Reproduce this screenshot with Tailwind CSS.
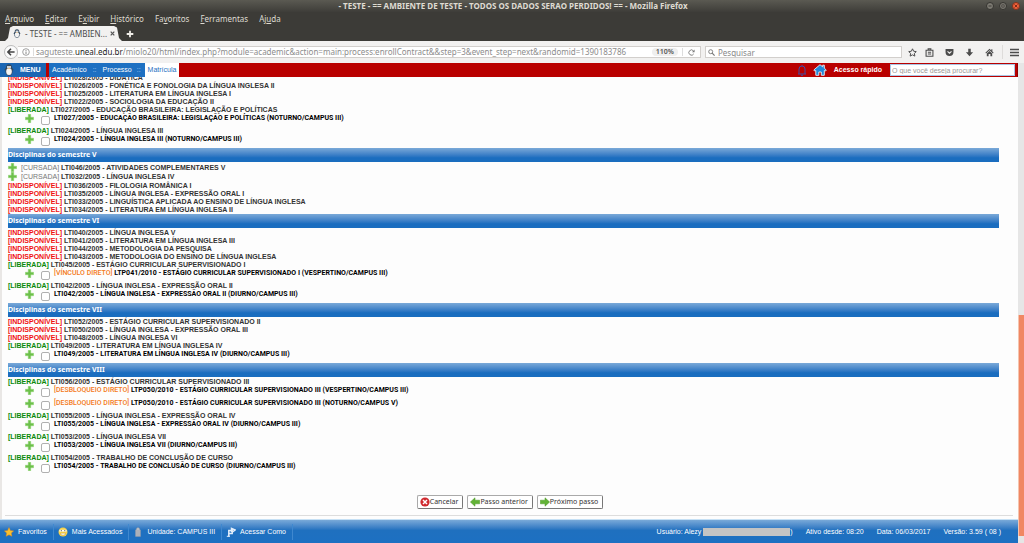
<!DOCTYPE html>
<html lang="pt-BR">
<head>
<meta charset="utf-8">
<meta name="viewport" content="width=device-width, initial-scale=1">
<title>- TESTE - == AMBIENTE DE TESTE - TODOS OS DADOS SERAO PERDIDOS! ==</title>
<script src="https://cdn.jsdelivr.net/npm/@tailwindcss/browser@4"></script>
</head>
<body class="flex h-screen flex-col overflow-hidden bg-[#fdfdfd] font-['Liberation_Sans',sans-serif] text-[7px] leading-[8px] text-[#333]">
<svg class="hidden">
  <symbol id="plus" viewBox="0 0 10 10"><path d="M3.600.4h2.800v3.200h3.200v2.800H6.400v3.200H3.600V6.400H.4V3.600h3.200z" fill="#6cc04a" stroke="#8fd474" stroke-width=".5"/></symbol>
  <symbol id="mascot" viewBox="0 0 10 12"><path d="M5 .3C2.600.3 2 2 2 3.500L.3 6l1.200.5C1.200 9.300 2.500 11.700 5 11.700s3.800-2.400 3.500-5.200L9.700 6 8 3.500C8 2 7.400.3 5 .3z" fill="#34495e"/><ellipse cx="5" cy="7.500" rx="2.800" ry="3.600" fill="#f4f4f4"/><circle cx="4" cy="3" r="1" fill="#fff"/><circle cx="6" cy="3" r="1" fill="#fff"/><path d="M4 4h2L5 5.300z" fill="#e9a13b"/></symbol>
</svg>

<!-- Window title and menu -->
<header class="shrink-0 bg-[#3c3b37] font-['Noto_Sans',sans-serif] text-[#dfdbd2]">
  <div class="flex h-3 items-center bg-linear-to-b from-[#5b5a52] to-[#3e3d39]">
    <h1 class="flex-1 pl-10 text-center text-[8px] font-bold">- TESTE - == AMBIENTE DE TESTE - TODOS OS DADOS SERAO PERDIDOS! == - Mozilla Firefox</h1>
    <div class="flex gap-[5px] pr-1">
      <button aria-label="Minimizar" class="size-2 rounded-full border border-[#34332f] bg-[#7d7b73]"><svg viewBox="0 0 6 6"><path d="M1.500 3h3" stroke="#3c3b37"/></svg></button>
      <button aria-label="Maximizar" class="size-2 rounded-full border border-[#34332f] bg-[#7d7b73]"><svg viewBox="0 0 6 6"><path d="M1.800 1.800h2.400v2.400H1.800z" fill="none" stroke="#3c3b37" stroke-width=".7"/></svg></button>
      <button aria-label="Fechar" class="size-2 rounded-full border border-[#7d321c] bg-[#f0603a]"><svg viewBox="0 0 6 6"><path d="M1.500 1.500l3 3m0-3l-3 3" stroke="#5d2211" stroke-width=".8"/></svg></button>
    </div>
  </div>
  <nav class="flex h-[14px] items-center gap-[11px] pl-[5px] text-[8px]">
    <button><u>A</u>rquivo</button><button><u>E</u>ditar</button><button>E<u>x</u>ibir</button><button><u>H</u>istórico</button><button>Fa<u>v</u>oritos</button><button><u>F</u>erramentas</button><button>Aj<u>u</u>da</button>
  </nav>
  <div class="flex h-[15px] items-center pl-[5px]">
    <div class="flex h-full w-[117px] items-center bg-[#f2f1f0] pr-[7px] pl-2 text-[#4c4c4c] [clip-path:polygon(0_100%,3px_80%,5px_10%,8px_0,109px_0,112px_10%,114px_80%,117px_100%)]">
      <svg class="h-[9px] w-2 shrink-0"><use href="#mascot"/></svg>
      <span class="ml-1 flex-1 text-[8px] whitespace-nowrap">- TESTE - == AMBIEN...</span>
      <button aria-label="Fechar aba"><svg class="size-[5px]" viewBox="0 0 5 5"><path d="M.7.7l3.600 3.600m0-3.600L.7 4.300" stroke="#555" stroke-width="1.200"/></svg></button>
    </div>
    <button aria-label="Nova aba" class="ml-1"><svg class="size-2" viewBox="0 0 8 8"><path d="M4 .7v6.600M.7 4h6.600" stroke="#f0eee8" stroke-width="1.800"/></svg></button>
  </div>
</header>

<!-- Navigation toolbar -->
<div class="flex h-[22px] shrink-0 items-center bg-[#f2f1f0] pr-[5px] pl-1 font-['Noto_Sans',sans-serif] text-[#444]">
  <button aria-label="Voltar" class="grid size-[14px] shrink-0 place-items-center rounded-full border border-[#bbb] bg-[#fbfbfb]"><svg class="size-2" viewBox="0 0 8 8"><path d="M4 .8L.9 4 4 7.200M1 4h6.600" fill="none" stroke="#444" stroke-width="1.500"/></svg></button>
  <div class="flex h-3 flex-1 items-center border border-l-0 border-[#d2cfcc] bg-white pl-1">
    <svg class="size-2 shrink-0" viewBox="0 0 8 8"><circle cx="4" cy="4" r="3.300" fill="none" stroke="#888" stroke-width=".8"/><path d="M4 2v.9M4 3.500V6" stroke="#888"/></svg>
    <div class="ml-[3px] h-2 border-l border-[#ddd]"></div>
    <div class="ml-[2px] flex-1 text-[8px] whitespace-nowrap text-[#8c8c8c]">saguteste.<span class="text-[#222]">uneal.edu.br</span>/miolo20/html/index.php?module=academic&amp;action=main:process:enrollContract&amp;&amp;step=3&amp;event_step=next&amp;randomid=1390183786</div>
    <button class="rounded-full bg-[#efefef] px-1 text-[7px] font-semibold text-[#555]">110%</button>
    <div class="ml-1 h-2 border-l border-[#ddd]"></div>
    <button aria-label="Recarregar" class="mx-[5px]"><svg class="size-[7px]" viewBox="0 0 8 8"><path d="M6.600 5.500A3 3 0 1 1 6.300 2.200" fill="none" stroke="#777"/><path d="M7.500.6v3H4.600z" fill="#777"/></svg></button>
  </div>
  <label class="ml-1 flex h-3 w-[197px] items-center gap-[3px] border border-[#d2cfcc] bg-white px-[2px]">
    <svg class="size-[7px] shrink-0" viewBox="0 0 7 7"><circle cx="2.700" cy="2.700" r="2" fill="none" stroke="#777" stroke-width=".9"/><path d="M4.200 4.200L6.600 6.600" stroke="#777" stroke-width="1.200"/></svg>
    <input type="text" aria-label="Pesquisar" placeholder="Pesquisar" class="h-[10px] min-w-0 flex-1 text-[8px] outline-none placeholder:text-[#888]">
  </label>
  <div class="ml-[6px] flex items-center">
    <button aria-label="Favoritar"><svg class="size-[9px]" viewBox="0 0 10 10"><path d="M5 .9l1.300 2.700 2.900.4-2.100 2 .5 3L5 7.600 2.400 9l.5-3L.8 4l2.900-.4z" fill="none" stroke="#4c4c4c" stroke-width="1.100"/></svg></button>
    <button aria-label="Biblioteca" class="ml-2"><svg class="size-[9px]" viewBox="0 0 10 10"><path d="M1.200 2.500h7.600v6.700H1.200zM3.500 2.300V1h3v1.300M3.200 4.700h3.600M3.200 6.700h3.600" fill="none" stroke="#4c4c4c" stroke-width="1.200"/></svg></button>
    <button aria-label="Pocket" class="ml-[11px]"><svg class="size-[9px]" viewBox="0 0 10 10"><path d="M.6 1h8.800v3.500a4.400 4.400 0 0 1-8.800 0z" fill="#4c4c4c"/><path d="M2.800 3.700L5 5.800l2.200-2.100" fill="none" stroke="#f2f1f0" stroke-width="1.200"/></svg></button>
    <button aria-label="Downloads" class="ml-[11px]"><svg class="size-[9px]" viewBox="0 0 10 10"><path d="M3.600.8h2.800v4H9L5 9.300 1 4.800h2.600z" fill="#4c4c4c"/></svg></button>
    <button aria-label="Página inicial" class="ml-[11px]"><svg class="size-[9px]" viewBox="0 0 10 10"><path d="M5 .8L.4 5.200l.8.8L5 2.600 8.800 6l.8-.8L8.200 3.800V1.500H7v1.200z" fill="#4c4c4c"/><path d="M2 6l3-2.700L8 6v3.200H6V6.600H4v2.600H2z" fill="#4c4c4c"/></svg></button>
    <div class="ml-2 h-[14px] border-l border-[#dedcda]"></div>
    <button aria-label="Abrir menu" class="ml-[7px]"><svg class="size-[9px]" viewBox="0 0 9 9"><path d="M0 1.500h9M0 4.500h9M0 7.500h9" stroke="#4c4c4c" stroke-width="1.300"/></svg></button>
  </div>
</div>

<div class="flex min-h-0 flex-1">
  <div class="flex min-w-0 flex-1 flex-col">
    <!-- Application bar -->
    <div class="flex h-[14px] shrink-0 items-center border-r border-[#8c0000] bg-[#b90000] text-white">
      <button class="flex h-full w-[46px] items-center gap-[6px] bg-[#1a66b4] pl-1 font-bold"><svg class="h-3 w-[10px]"><use href="#mascot"/></svg>MENU</button>
      <nav class="ml-[3px] flex h-full items-center bg-[#1d70c2]">
        <a href="#" class="pl-[3px]">Acadêmico</a><span class="px-[6px] text-[#a9cdf0]">::</span><a href="#">Processo</a><span class="pr-1 pl-[5px] text-[#a9cdf0]">::</span>
        <a href="#" class="flex h-full items-center bg-white px-[3px] text-[#1d70c2]">Matrícula</a>
      </nav>
      <div class="flex-1"></div>
      <button aria-label="Avisos"><svg class="h-[11px] w-[10px]" viewBox="0 0 10 11"><path d="M1 9h8M2 9V4a3 3 0 0 1 6 0v5M4 10.300h2M5 1V.2" fill="none" stroke="#3f4fa6" stroke-width="1"/></svg></button>
      <button aria-label="Início" class="ml-[6px]"><svg class="h-3 w-[14px]" viewBox="0 0 14 12"><path d="M7 .7L.8 6l1 1.100 1-.6v4.800h3V8h2.500v3.300h3V6.500l1 .6 1-1.100-2-1.800V1.200H9.700v1.600z" fill="#2187d8" stroke="#e8f3fb" stroke-width=".9"/></svg></button>
      <label for="quick" class="ml-[7px] font-bold">Acesso rápido</label>
      <input id="quick" type="text" placeholder="O que você deseja procurar?" class="mr-[2px] ml-2 h-3 w-[125px] border border-[#aac6e4] bg-white px-px text-[7px] text-[#333] outline-none placeholder:text-[#999]">
    </div>
    <!-- Enrolment list -->
    <main class="flex min-h-0 flex-1 flex-col border-l-2 border-[#e9e7e5]">
      <div class="min-h-0 flex-1 overflow-hidden pr-[19px] pl-[6px]">
        <div id="list" class="-mt-[3px]"></div>
      </div>
      <div class="flex shrink-0 justify-center gap-1 pb-[6px] font-['Noto_Sans',sans-serif] text-[7px] text-[#333]">
        <button class="flex h-[14px] items-center rounded-[2px] border border-[#aaa] border-r-[#777] border-b-[#777] bg-white pr-1 pl-[2px]"><svg class="size-[10px]" viewBox="0 0 10 10"><circle cx="5" cy="5" r="4.600" fill="#cf2a2f"/><path d="M3 3l4 4m0-4L3 7" stroke="#fff" stroke-width="1.500"/></svg>Cancelar</button>
        <button class="flex h-[14px] items-center rounded-[2px] border border-[#aaa] border-r-[#777] border-b-[#777] bg-white pr-1 pl-[2px]"><svg class="size-[10px]" viewBox="0 0 10 10"><path d="M5 .8v2.400h4.600v3.600H5v2.400L.4 5z" fill="#62b336" stroke="#4b9427" stroke-width=".5"/></svg>Passo anterior</button>
        <button class="flex h-[14px] items-center rounded-[2px] border border-[#aaa] border-r-[#777] border-b-[#777] bg-white pr-1 pl-[2px]"><svg class="size-[10px]" viewBox="0 0 10 10"><path d="M5 .8v2.400H.4v3.600H5v2.400L9.600 5z" fill="#62b336" stroke="#4b9427" stroke-width=".5"/></svg>Próximo passo</button>
      </div>
      <div class="mr-[5px] mb-[3px] ml-[3px] shrink-0 border-t border-[#ddd]"></div>
    </main>
    <!-- Status bar -->
    <footer class="flex h-6 shrink-0 items-center border-t border-[#c5e0f5] bg-linear-to-b from-[#79a9d8] via-[#1f70bf] via-45% to-[#1d70c2] text-white">
      <a href="#" class="flex h-4 items-center gap-1 border-r border-[#3f88cf] pr-[6px] pl-1"><svg class="size-[10px]" viewBox="0 0 10 10"><path d="M5 .6l1.400 2.900 3.200.4-2.300 2.200.6 3.200L5 7.800 2.100 9.300l.6-3.200L.4 3.900l3.200-.4z" fill="#fbc02d" stroke="#e08a1e" stroke-width=".5"/></svg>Favoritos</a>
      <a href="#" class="flex h-4 items-center gap-1 border-r border-[#3f88cf] pr-[6px] pl-1"><svg class="size-[10px]" viewBox="0 0 10 10"><circle cx="5" cy="5" r="4.500" fill="#f9d34a"/><path d="M1.500 3.700h7" stroke="#fff" stroke-width="1.800"/><path d="M2.800 3.700h1M6.300 3.700h1" stroke="#444"/><path d="M2.500 6.200h5a2.500 2 0 0 1-5 0z" fill="#fff" stroke="#b8862a" stroke-width=".4"/></svg>Mais Acessados</a>
      <a href="#" class="flex h-4 items-center gap-1 border-r border-[#3f88cf] pr-[6px] pl-1"><svg class="size-[10px]" viewBox="0 0 10 10"><path d="M2.500 9.500V3l1-.8V1.200L5 .4l1.500.8v1l1 .8v6.500z" fill="#b9bec6" stroke="#8a919c" stroke-width=".4"/><path d="M4 3v6M6 3v6" stroke="#8a919c" stroke-width=".6"/></svg>Unidade: CAMPUS III</a>
      <a href="#" class="flex h-4 items-center gap-1 border-r border-[#3f88cf] pr-[6px] pl-1"><svg class="size-[10px]" viewBox="0 0 10 10"><path d="M2.800 9.500V3.500h3.400v3H3M5.500 5V1.500L9 3 6.500 5" fill="none" stroke="#e4eefa" stroke-width="1.500"/><path d="M.8 9.300h3.200" stroke="#e4eefa"/></svg>Acessar Como</a>
      <div class="ml-auto flex items-center gap-[13px] pr-[17px]">
        <span class="flex items-center">Usuário: Alezy<span class="ml-[2px] h-2 w-[87px] bg-[#c4c4c4]"></span>)</span>
        <span>Ativo desde: 08:20</span><span>Data: 06/03/2017</span><span>Versão: 3.59 ( 08 )</span>
      </div>
    </footer>
  </div>
  <!-- Page scroll bar -->
  <div class="flex w-[6px] flex-col bg-[#e6e6e6]"><div class="flex-[252]"></div><div class="flex-[221] border-l border-[#f5c4ae] bg-[#f08763]"></div><div class="flex-[7]"></div></div>
</div>

<script>
const X = 'x', L = 'l', C = 'c', S = 's', B = 'b';
const rows = [
  [X, 'LTI028/2005 - DIDÁTICA'],
  [X, 'LTI026/2005 - FONÉTICA E FONOLOGIA DA LÍNGUA INGLESA II'],
  [X, 'LTI025/2005 - LITERATURA EM LÍNGUA INGLESA I'],
  [X, 'LTI022/2005 - SOCIOLOGIA DA EDUCAÇÃO II'],
  [L, 'LTI027/2005 - EDUCAÇÃO BRASILEIRA: LEGISLAÇÃO E POLÍTICAS'],
  [S, 'LTI027/2005 - EDUCAÇÃO BRASILEIRA: LEGISLAÇÃO E POLÍTICAS (NOTURNO/CAMPUS III)'],
  [L, 'LTI024/2005 - LÍNGUA INGLESA III'],
  [S, 'LTI024/2005 - LÍNGUA INGLESA III (NOTURNO/CAMPUS III)'],
  [B, 'Disciplinas do semestre V'],
  [C, 'LTI046/2005 - ATIVIDADES COMPLEMENTARES V'],
  [C, 'LTI032/2005 - LÍNGUA INGLESA IV'],
  [X, 'LTI036/2005 - FILOLOGIA ROMÂNICA I'],
  [X, 'LTI035/2005 - LÍNGUA INGLESA - EXPRESSÃO ORAL I'],
  [X, 'LTI033/2005 - LINGUÍSTICA APLICADA AO ENSINO DE LÍNGUA INGLESA'],
  [X, 'LTI034/2005 - LITERATURA EM LÍNGUA INGLESA II'],
  [B, 'Disciplinas do semestre VI'],
  [X, 'LTI040/2005 - LÍNGUA INGLESA V'],
  [X, 'LTI041/2005 - LITERATURA EM LÍNGUA INGLESA III'],
  [X, 'LTI044/2005 - METODOLOGIA DA PESQUISA'],
  [X, 'LTI043/2005 - METODOLOGIA DO ENSINO DE LÍNGUA INGLESA'],
  [L, 'LTI045/2005 - ESTÁGIO CURRICULAR SUPERVISIONADO I'],
  [S, 'LTP041/2010 - ESTÁGIO CURRICULAR SUPERVISIONADO I (VESPERTINO/CAMPUS III)', '[VÍNCULO DIRETO]'],
  [L, 'LTI042/2005 - LÍNGUA INGLESA - EXPRESSÃO ORAL II'],
  [S, 'LTI042/2005 - LÍNGUA INGLESA - EXPRESSÃO ORAL II (DIURNO/CAMPUS III)'],
  [B, 'Disciplinas do semestre VII'],
  [X, 'LTI052/2005 - ESTÁGIO CURRICULAR SUPERVISIONADO II'],
  [X, 'LTI050/2005 - LÍNGUA INGLESA - EXPRESSÃO ORAL III'],
  [X, 'LTI048/2005 - LÍNGUA INGLESA VI'],
  [L, 'LTI049/2005 - LITERATURA EM LÍNGUA INGLESA IV'],
  [S, 'LTI049/2005 - LITERATURA EM LÍNGUA INGLESA IV (DIURNO/CAMPUS III)'],
  [B, 'Disciplinas do semestre VIII'],
  [L, 'LTI056/2005 - ESTÁGIO CURRICULAR SUPERVISIONADO III'],
  [S, 'LTP050/2010 - ESTÁGIO CURRICULAR SUPERVISIONADO III (VESPERTINO/CAMPUS III)', '[DESBLOQUEIO DIRETO]'],
  [S, 'LTP050/2010 - ESTÁGIO CURRICULAR SUPERVISIONADO III (NOTURNO/CAMPUS V)', '[DESBLOQUEIO DIRETO]'],
  [L, 'LTI055/2005 - LÍNGUA INGLESA - EXPRESSÃO ORAL IV'],
  [S, 'LTI055/2005 - LÍNGUA INGLESA - EXPRESSÃO ORAL IV (DIURNO/CAMPUS III)'],
  [L, 'LTI053/2005 - LÍNGUA INGLESA VII'],
  [S, 'LTI053/2005 - LÍNGUA INGLESA VII (DIURNO/CAMPUS III)'],
  [L, 'LTI054/2005 - TRABALHO DE CONCLUSÃO DE CURSO'],
  [S, 'LTI054/2005 - TRABALHO DE CONCLUSÃO DE CURSO (DIURNO/CAMPUS III)'],
];
const plus = '<button aria-label="Detalhes" class="shrink-0"><svg class="size-[9px]"><use href="#plus"/></svg></button>';
const draw = {
  x: t => `<p class="h-2 font-bold whitespace-nowrap"><span class="text-[#f01010]">[INDISPONÍVEL]</span> ${t}</p>`,
  l: t => `<p class="h-2 font-bold whitespace-nowrap"><span class="text-[#0a8a0a]">[LIBERADA]</span> ${t}</p>`,
  c: t => `<div class="flex h-[9px] items-center gap-1 whitespace-nowrap [&+p]:mt-px">${plus}<p><span class="text-[#777]">[CURSADA]</span> <b>${t}</b></p></div>`,
  s: (t, tag) => `<div class="flex h-[13px] items-start pl-[17px] font-['Roboto',sans-serif] text-black">${plus}<label class="flex items-start gap-1 pl-[7px] whitespace-nowrap"><input type="checkbox" class="mt-[2px] size-[9px] appearance-none rounded-[2px] border border-[#b0b0b0] bg-white checked:bg-[#1d70c2]"><span>${tag ? `<span class="font-medium text-[#f47a20]">${tag}</span> ` : ''}<b>${t}</b></span></label></div>`,
  b: t => `<h2 class="mb-px flex h-[14px] items-center bg-linear-to-b from-[#7aa9d8] to-[#1a6dbf] to-70% font-['Noto_Sans',sans-serif] font-bold text-white">${t}</h2>`,
};
document.getElementById('list').innerHTML = rows.map(([k, t, tag]) => draw[k](t, tag)).join('');
</script>
</body>
</html>
